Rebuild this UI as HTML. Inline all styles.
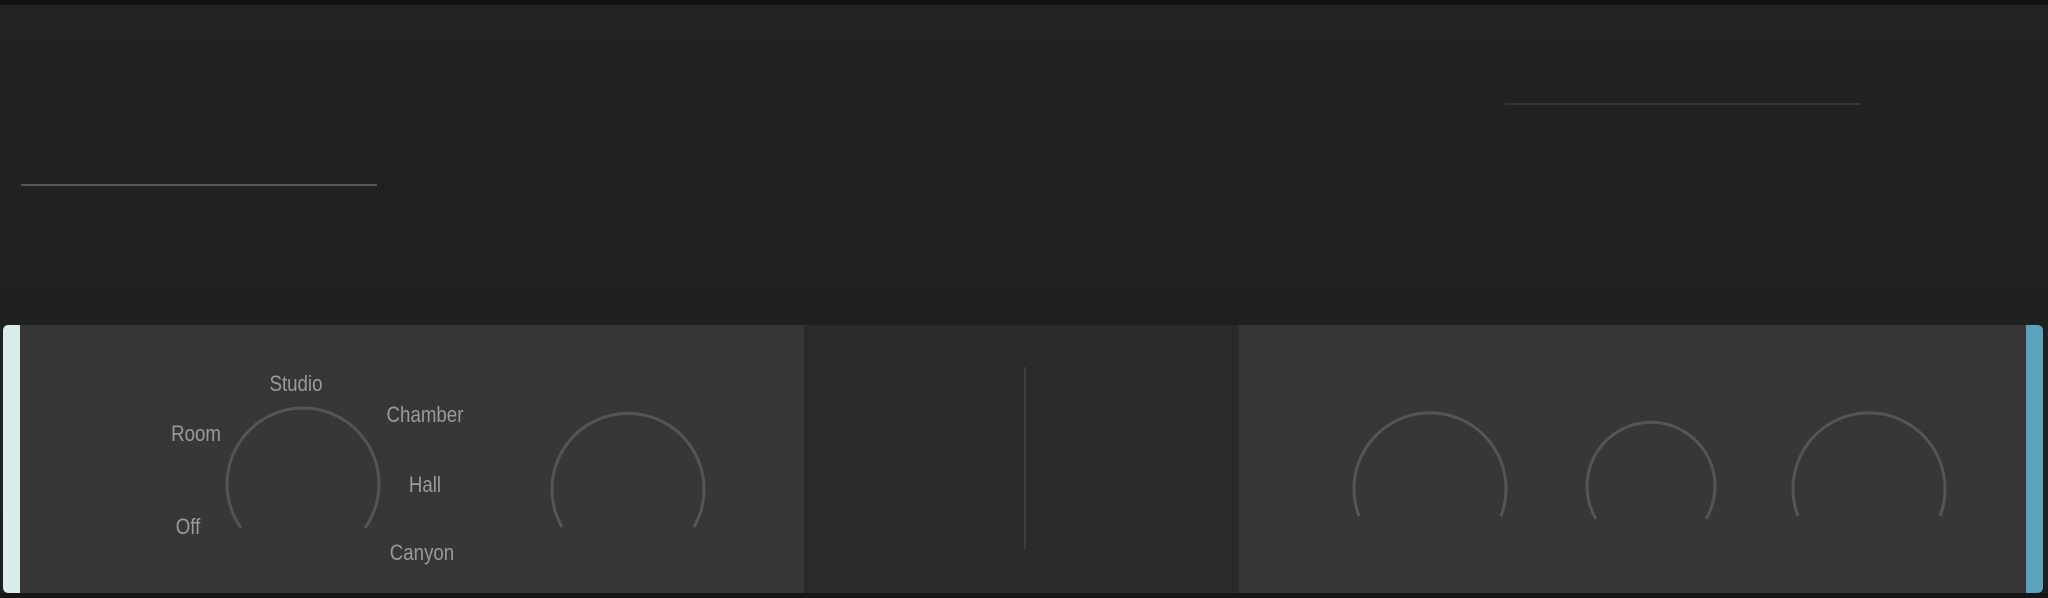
<!DOCTYPE html>
<html><head><meta charset="utf-8"><style>
html,body{margin:0;padding:0;background:#1e1f1f;}
svg{display:block}
text{font-family:"Liberation Sans",sans-serif;fill:#9a9a9a;font-size:22px;}
</style></head><body>
<svg width="2048" height="598" viewBox="0 0 2048 598" xmlns="http://www.w3.org/2000/svg">
<defs>
<linearGradient id="bg" x1="0" y1="0" x2="0" y2="1">
<stop offset="0" stop-color="#222323"/><stop offset="1" stop-color="#1d1e1e"/>
</linearGradient>
</defs>
<rect width="2048" height="598" fill="url(#bg)"/>
<rect width="2048" height="5" fill="#111212"/>
<rect x="21" y="184" width="356" height="2" fill="#555"/>
<rect x="1505" y="103" width="356" height="2" fill="#353535"/>
<rect x="0" y="593" width="2048" height="5" fill="#151616"/>
<rect x="3" y="325" width="2040" height="268" rx="6" fill="#373737"/>
<path d="M9 325 H20 V593 H9 Q3 593 3 587 V331 Q3 325 9 325 Z" fill="#dcecec"/>
<path d="M2026 325 H2037 Q2043 325 2043 331 V587 Q2043 593 2037 593 H2026 Z" fill="#5ba3bd"/>
<rect x="804" y="325" width="435" height="268" fill="#2a2a2a"/>
<rect x="1024" y="367" width="2" height="182" fill="#3c3c3c"/>
<g fill="none" stroke="#555" stroke-width="3">
<path d="M241 528 A76 76 0 1 1 365 528"/>
<path d="M562 527 A76 76 0 1 1 694 527"/>
<path d="M1359 516 A76 76 0 1 1 1501 516"/>
<path d="M1596 519 A64 64 0 1 1 1706 519"/>
<path d="M1798 516 A76 76 0 1 1 1940 516"/>
</g>
<g text-anchor="middle">
<text x="296" y="391" transform="translate(296 0) scale(0.85 1) translate(-296 0)">Studio</text>
<text x="196" y="441" transform="translate(196 0) scale(0.85 1) translate(-196 0)">Room</text>
<text x="425" y="422" transform="translate(425 0) scale(0.85 1) translate(-425 0)">Chamber</text>
<text x="425" y="492" transform="translate(425 0) scale(0.85 1) translate(-425 0)">Hall</text>
<text x="188" y="534" transform="translate(188 0) scale(0.85 1) translate(-188 0)">Off</text>
<text x="422" y="560" transform="translate(422 0) scale(0.85 1) translate(-422 0)">Canyon</text>
</g>
</svg>
</body></html>
